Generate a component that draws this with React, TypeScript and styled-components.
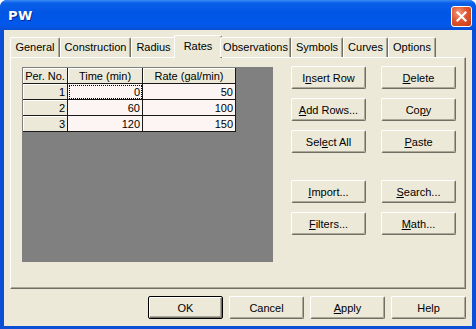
import React from "react";
import styled, { createGlobalStyle } from "styled-components";

const Global = createGlobalStyle`
  html, body { margin: 0; padding: 0; background: #ffffff; }
  body { width: 476px; height: 329px; overflow: hidden; }
`;

const Window = styled.div`
  width: 476px;
  height: 329px;
  box-sizing: border-box;
  display: flex;
  flex-direction: column;
  background: #0a4fd6;
  border-radius: 7px 7px 0 0;
  overflow: hidden;
  font-family: "Liberation Sans", Arial, sans-serif;
  font-size: 11px;
  color: #000;
`;

const TitleBar = styled.div`
  height: 30px;
  flex: none;
  display: flex;
  align-items: center;
  justify-content: space-between;
  padding: 0 4px 0 8px;
  background: linear-gradient(
    to bottom,
    #3b8cf5 0%,
    #0a5fe8 10%,
    #0055e5 45%,
    #0059ec 80%,
    #0a4fd6 100%
  );
`;

const Title = styled.span`
  font-family: "DejaVu Sans", Verdana, sans-serif;
  font-weight: bold;
  font-size: 13px;
  color: #ffffff;
  text-shadow: 1px 1px 0 #0a2a8a;
  letter-spacing: 0.5px;
`;

const CloseButton = styled.div`
  width: 21px;
  height: 21px;
  box-sizing: border-box;
  margin-top: 3px;
  border: 1px solid #ffffff;
  border-radius: 3px;
  background: radial-gradient(circle at 35% 30%, #f29a7e 0%, #e0552f 45%, #c73a14 100%);
  display: flex;
  align-items: center;
  justify-content: center;
`;

const Frame = styled.div`
  flex: 1;
  display: flex;
  padding: 0 4px 3px 4px;
`;

const Body = styled.div`
  flex: 1;
  display: flex;
  flex-direction: column;
  background: #ece9d8;
  padding: 5px 6px 7px 6px;
`;

const TabRow = styled.div`
  display: flex;
  align-items: flex-end;
  height: 22px;
  position: relative;
  z-index: 1;
`;

const Tab = styled.div<{ $w: number; $active?: boolean }>`
  box-sizing: border-box;
  width: ${(p) => (p.$active ? p.$w + 4 : p.$w)}px;
  height: ${(p) => (p.$active ? 23 : 20)}px;
  margin: ${(p) => (p.$active ? "0 -2px -1px -2px" : "0")};
  background: #ece9d8;
  border-top: 1px solid #ffffff;
  border-left: 1px solid #ffffff;
  border-right: 1px solid #716f64;
  border-radius: 2px 2px 0 0;
  box-shadow: inset -1px 0 0 #aca899;
  display: flex;
  justify-content: center;
  padding-top: ${(p) => (p.$active ? 4 : 3)}px;
  white-space: nowrap;
`;

const Panel = styled.div`
  height: 232px;
  box-sizing: border-box;
  display: flex;
  background: #ece9d8;
  border-top: 1px solid #ffffff;
  border-left: 1px solid #ffffff;
  border-right: 1px solid #716f64;
  border-bottom: 1px solid #716f64;
  box-shadow: inset -1px -1px 0 #aca899;
  padding: 9px 0 0 11px;
`;

const GridBox = styled.div`
  width: 251px;
  height: 195px;
  box-sizing: border-box;
  background: #808080;
  padding: 1px;
  flex: none;
`;

const Table = styled.div`
  display: grid;
  grid-template-columns: 45px 75px 93px;
  grid-auto-rows: 16px;
  width: 213px;
`;

const Cell = styled.div<{ $kind: "head" | "row" | "data"; $focus?: boolean }>`
  box-sizing: border-box;
  border-right: 1px solid #1a1a1a;
  border-bottom: 1px solid #1a1a1a;
  background: ${(p) => (p.$kind === "data" ? "#fcf5f3" : "#ece9d8")};
  box-shadow: ${(p) => (p.$kind === "data" ? "none" : "inset 1px 1px 0 #ffffff")};
  display: flex;
  align-items: center;
  justify-content: ${(p) => (p.$kind === "head" ? "center" : "flex-end")};
  padding: 0 2px 0 2px;
  line-height: 14px;
  white-space: nowrap;
  outline: ${(p) => (p.$focus ? "1px dotted #000" : "none")};
  outline-offset: -2px;
`;

const Side = styled.div`
  display: flex;
  flex-direction: column;
  margin-left: 18px;
  margin-top: -1px;
`;

const ButtonGrid = styled.div<{ $top?: number }>`
  display: grid;
  grid-template-columns: 75px 75px;
  column-gap: 15px;
  row-gap: 9px;
  margin-top: ${(p) => p.$top ?? 0}px;
`;

const Button = styled.div<{ $default?: boolean }>`
  width: 75px;
  height: 23px;
  box-sizing: border-box;
  display: flex;
  align-items: center;
  justify-content: center;
  background: #ece9d8;
  border-radius: 2px;
  border: 1px solid;
  border-color: ${(p) => (p.$default ? "#000 #000 #000 #000" : "#ffffff #716f64 #716f64 #ffffff")};
  box-shadow: ${(p) =>
    p.$default
      ? "inset 1px 1px 0 #ffffff, inset -1px -1px 0 #716f64, inset -2px -2px 0 #aca899"
      : "inset -1px -1px 0 #aca899"};
  white-space: nowrap;
`;

const Key = styled.span`
  text-decoration: underline;
`;

const Footer = styled.div`
  display: flex;
  justify-content: flex-end;
  gap: 6px;
  margin-top: 7px;
`;

const tabs: [string, number][] = [
  ["General", 50],
  ["Construction", 71],
  ["Radius", 45],
  ["Rates", 44],
  ["Observations", 71],
  ["Symbols", 52],
  ["Curves", 45],
  ["Options", 48],
];

const rows = [
  ["1", "0", "50"],
  ["2", "60", "100"],
  ["3", "120", "150"],
];

export default function App() {
  return (
    <>
      <Global />
      <Window>
        <TitleBar>
          <Title>PW</Title>
          <CloseButton>
            <svg width="13" height="13" viewBox="0 0 13 13">
              <path d="M2.5 2.5 L10.5 10.5 M10.5 2.5 L2.5 10.5" stroke="#fff" strokeWidth="2.2" strokeLinecap="square" />
            </svg>
          </CloseButton>
        </TitleBar>
        <Frame>
          <Body>
            <TabRow>
              {tabs.map(([label, w]) => (
                <Tab key={label} $w={w} $active={label === "Rates"}>
                  {label}
                </Tab>
              ))}
            </TabRow>
            <Panel>
              <GridBox>
                <Table>
                  <Cell $kind="head">Per. No.</Cell>
                  <Cell $kind="head">Time (min)</Cell>
                  <Cell $kind="head">Rate (gal/min)</Cell>
                  {rows.map((r, i) => (
                    <React.Fragment key={r[0]}>
                      <Cell $kind="row">{r[0]}</Cell>
                      <Cell $kind="data" $focus={i === 0}>{r[1]}</Cell>
                      <Cell $kind="data">{r[2]}</Cell>
                    </React.Fragment>
                  ))}
                </Table>
              </GridBox>
              <Side>
                <ButtonGrid>
                  <Button>I<Key>n</Key>sert Row</Button>
                  <Button><Key>D</Key>elete</Button>
                  <Button><Key>A</Key>dd Rows...</Button>
                  <Button>Co<Key>p</Key>y</Button>
                  <Button>Sel<Key>e</Key>ct All</Button>
                  <Button><Key>P</Key>aste</Button>
                </ButtonGrid>
                <ButtonGrid $top={27}>
                  <Button><Key>I</Key>mport...</Button>
                  <Button><Key>S</Key>earch...</Button>
                  <Button><Key>F</Key>ilters...</Button>
                  <Button><Key>M</Key>ath...</Button>
                </ButtonGrid>
              </Side>
            </Panel>
            <Footer>
              <Button $default>OK</Button>
              <Button>Cancel</Button>
              <Button><Key>A</Key>pply</Button>
              <Button>Help</Button>
            </Footer>
          </Body>
        </Frame>
      </Window>
    </>
  );
}
